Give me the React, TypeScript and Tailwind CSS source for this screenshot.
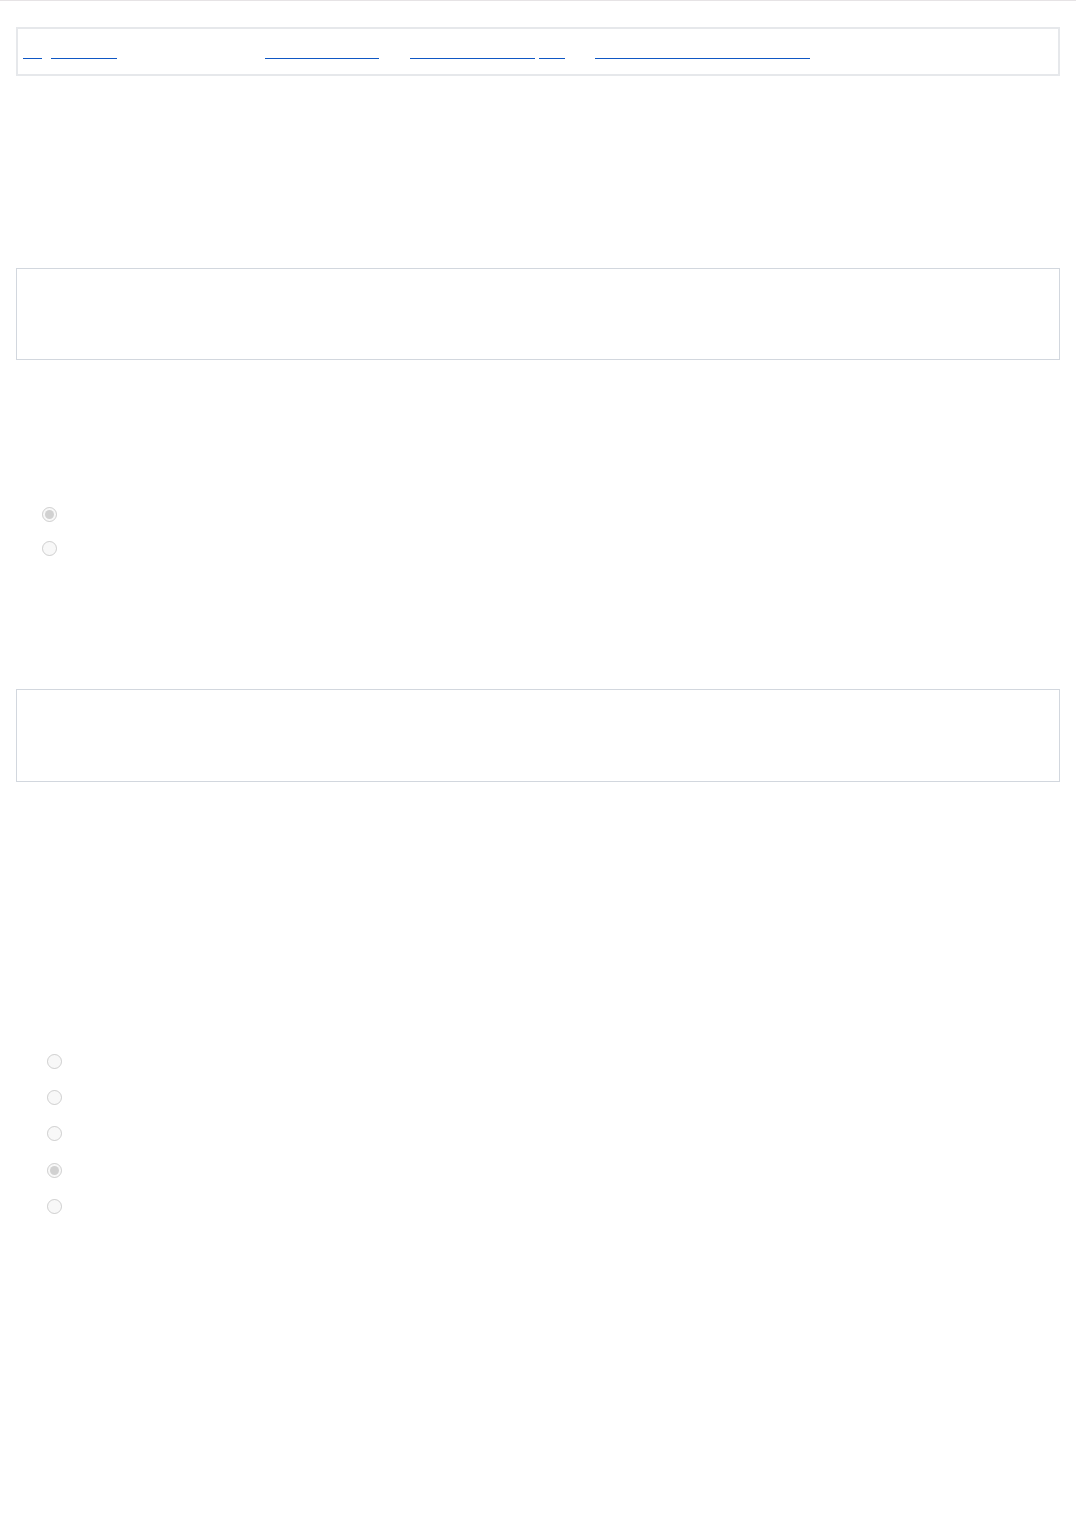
import React from 'react';

type Crumb = { label: string; width: string; gap: string };

// breadcrumb-ish nav, text is rendered transparent (only the underlines show)
const crumbs: Crumb[] = [
  { label: 'Ho', width: 'w-[19px]', gap: 'ml-[5px]' },
  { label: 'Account', width: 'w-[66px]', gap: 'ml-[9px]' },
  { label: 'Preferences', width: 'w-[114px]', gap: 'ml-[148px]' },
  { label: 'Notifications', width: 'w-[125px]', gap: 'ml-[31px]' },
  { label: 'Edit', width: 'w-[26px]', gap: 'ml-[4px]' },
  { label: 'Privacy and data settings', width: 'w-[215px]', gap: 'ml-[30px]' },
];

const firstOptions = ['Enabled', 'Disabled'];
const secondOptions = ['Never', 'Daily', 'Weekly', 'Monthly', 'Yearly'];

function Radio({ name, label, checked }: { name: string; label: string; checked?: boolean }) {
  return (
    <label className="flex items-center h-full">
      <input
        type="radio"
        name={name}
        defaultChecked={checked}
        disabled
        className="m-0 w-[15px] h-[15px]"
      />
      <span className="ml-2 text-sm text-transparent select-none">{label}</span>
    </label>
  );
}

export default function App() {
  return (
    <div className="min-h-screen bg-white font-['Liberation_Sans',Arial,sans-serif]">
      <div className="h-px bg-[#e6e3e5]" />
      <div className="px-4">
        <nav className="mt-[26px] h-[49px] border-2 border-[#e6e8eb] flex items-start pt-[10px]">
          {crumbs.map((c) => (
            <a
              key={c.label}
              href="#"
              className={`${c.gap} ${c.width} h-[20px] block overflow-hidden whitespace-nowrap border-b border-[#0f57c4] text-sm leading-[19px] text-transparent`}
            >
              {c.label}
            </a>
          ))}
        </nav>

        <section className="mt-[192px] h-[92px] border border-[#d2d7de]">
          <p className="p-4 text-sm text-transparent">Notification preferences</p>
        </section>

        <fieldset className="mt-[137px] ml-[26px]">
          {firstOptions.map((o, i) => (
            <div key={o} className="h-[34px]">
              <Radio name="status" label={o} checked={i === 0} />
            </div>
          ))}
        </fieldset>

        <section className="mt-[124px] h-[93px] border border-[#d2d7de]">
          <p className="p-4 text-sm text-transparent">Email frequency</p>
        </section>

        <fieldset className="mt-[261px] ml-[31px]">
          {secondOptions.map((o, i) => (
            <div key={o} className="h-[36.4px]">
              <Radio name="freq" label={o} checked={i === 3} />
            </div>
          ))}
        </fieldset>
      </div>
    </div>
  );
}
